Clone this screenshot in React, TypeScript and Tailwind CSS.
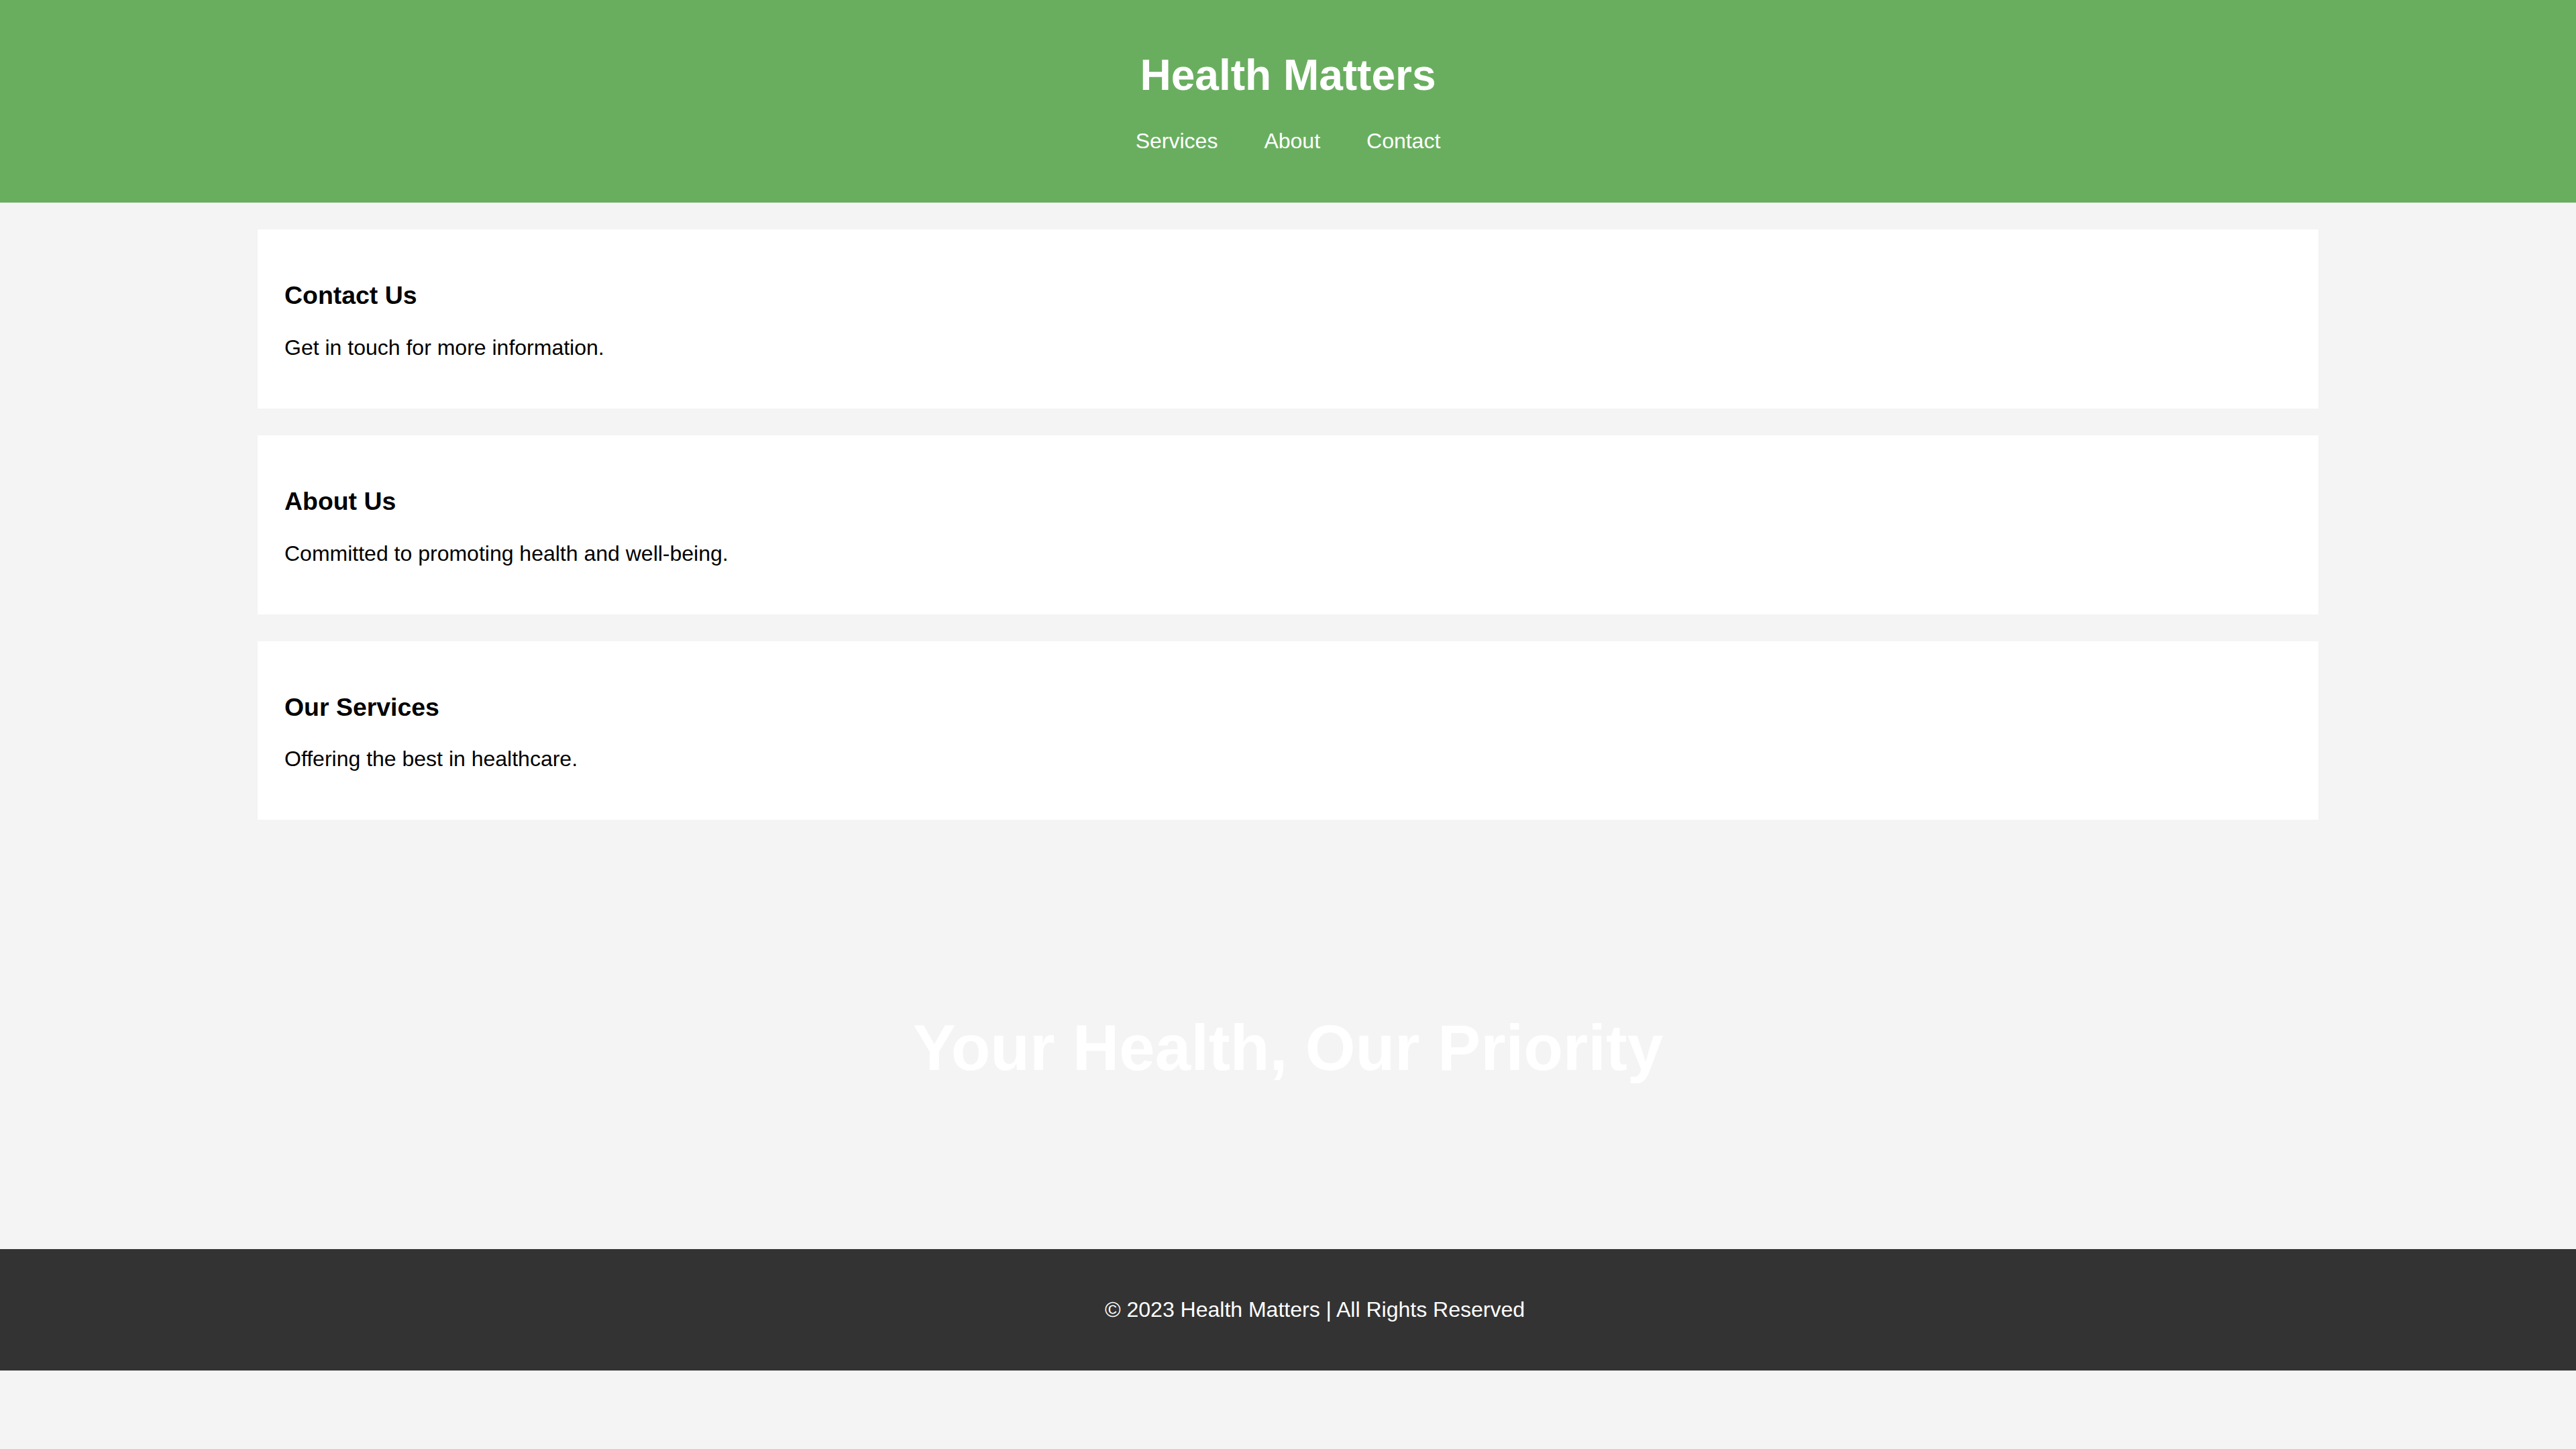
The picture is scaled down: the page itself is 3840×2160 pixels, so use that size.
export default function App() {
  const sections = [
    { title: "Contact Us", text: "Get in touch for more information." },
    { title: "About Us", text: "Committed to promoting health and well-being." },
    { title: "Our Services", text: "Offering the best in healthcare." },
  ];
  return (
    <div className="min-h-screen bg-[#f4f4f4] text-black font-['Liberation_Sans',Arial,Helvetica,sans-serif]">
      <header className="bg-[#69ae5f] text-white text-center pt-[32px] pb-[73px]">
        <h1 className="text-[64px] font-bold leading-[normal] mt-[42.88px] mb-[42.88px]">Health Matters</h1>
        <nav>
          <ul className="flex justify-center gap-[69px]">
            {["Services", "About", "Contact"].map((n) => (
              <li key={n}>
                <a className="text-[32px] leading-[normal] text-white">{n}</a>
              </li>
            ))}
          </ul>
        </nav>
      </header>

      <main className="w-[80%] mx-auto py-[40px] flex flex-col gap-[40px]">
        {sections.map((s) => (
          <section key={s.title} className="bg-white p-[40px]">
            <div>
              <h3 className="text-[37.44px] font-bold leading-[normal] mt-[37.44px] mb-[37.44px]">{s.title}</h3>
              <p className="text-[32px] leading-[normal] mb-[32px]">{s.text}</p>
            </div>
          </section>
        ))}
      </main>

      <section className="h-[600px] flex items-center justify-center">
        <h2 className="text-[96px] font-bold leading-[normal] text-white">Your Health, Our Priority</h2>
      </section>

      <footer className="bg-[#333333] text-white text-center py-[40px] pl-[80px]">
        <p className="text-[32px] leading-[normal] my-[32px]">© 2023 Health Matters | All Rights Reserved</p>
      </footer>
    </div>
  );
}
